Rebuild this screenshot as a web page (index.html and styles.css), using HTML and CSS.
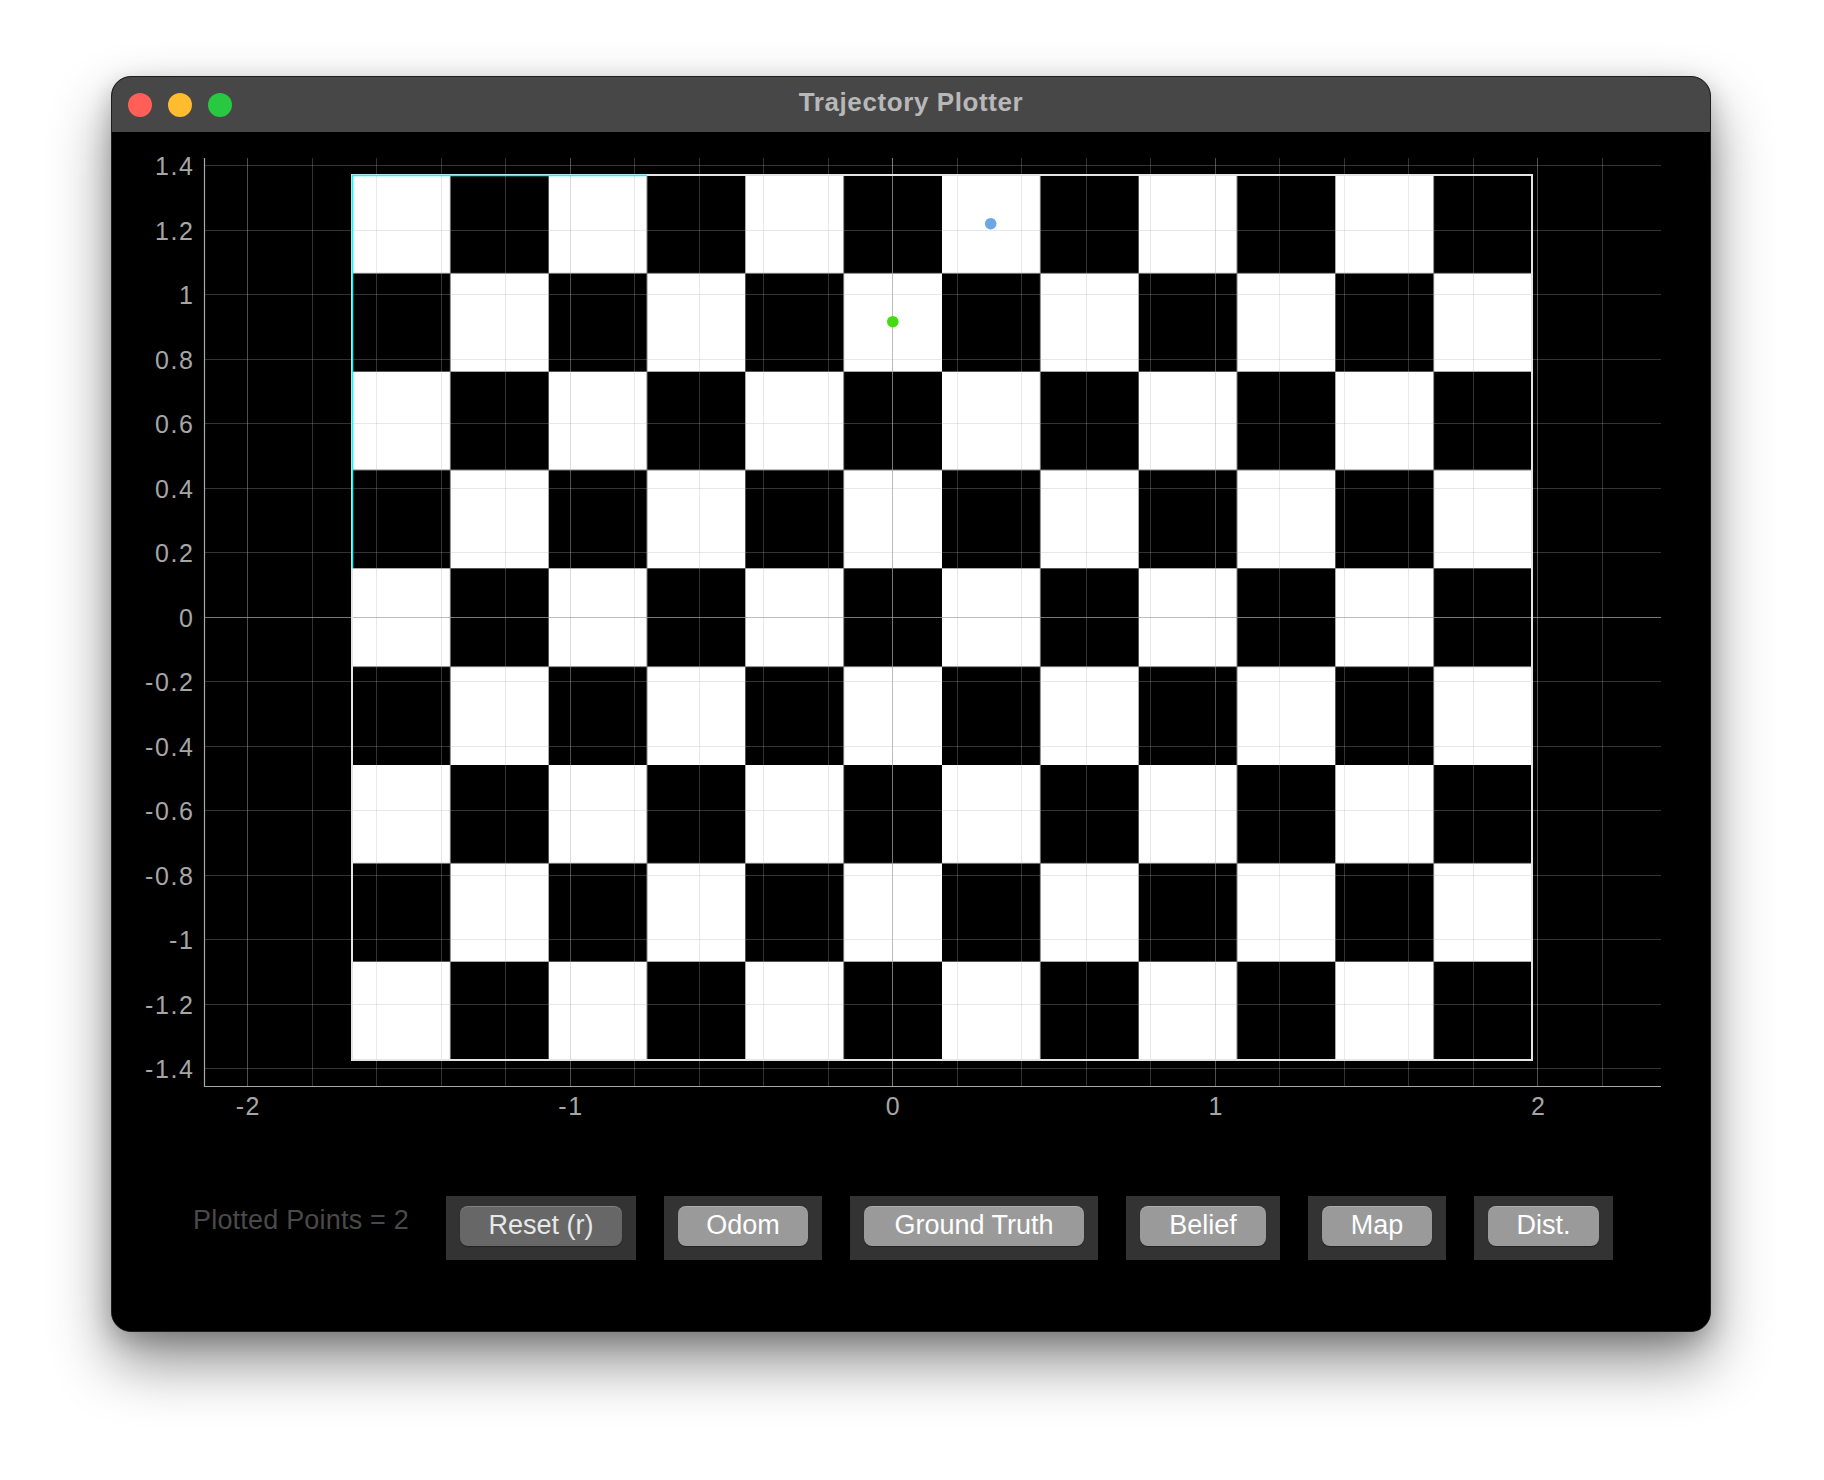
FILE: index.html
```html
<!DOCTYPE html>
<html lang="en">
<head>
<meta charset="utf-8">
<title>Trajectory Plotter</title>
<link rel="stylesheet" href="styles.css">
</head>
<body>
<div class="window">
  <div class="titlebar">
    <div class="lights">
      <span class="light light-red"></span>
      <span class="light light-yellow"></span>
      <span class="light light-green"></span>
    </div>
    <div class="title">Trajectory Plotter</div>
    <div></div>
  </div>
  <div class="content">
    <svg class="plot" viewBox="112 132 1598 1000" width="1598" height="1000" xmlns="http://www.w3.org/2000/svg">
      <defs>
        <pattern id="checker" patternUnits="userSpaceOnUse" x="352" y="175" width="196.667" height="196.667">
          <rect class="cell-white" x="0" y="0" width="98.333" height="98.333"/>
          <rect class="cell-white" x="98.333" y="98.333" width="98.333" height="98.333"/>
        </pattern>
      </defs>

      <rect class="board" x="352" y="175" width="1180" height="885" fill="url(#checker)"/>

      <path class="grid-minor" d="M312.5 158V1086 M376.5 158V1086 M441.5 158V1086 M505.5 158V1086 M634.5 158V1086 M699.5 158V1086 M763.5 158V1086 M828.5 158V1086 M957.5 158V1086 M1021.5 158V1086 M1086.5 158V1086 M1150.5 158V1086 M1279.5 158V1086 M1344.5 158V1086 M1408.5 158V1086 M1473.5 158V1086 M1602.5 158V1086
        M204 165.5H1661 M204 230.5H1661 M204 294.5H1661 M204 359.5H1661 M204 423.5H1661 M204 488.5H1661 M204 552.5H1661 M204 681.5H1661 M204 746.5H1661 M204 810.5H1661 M204 875.5H1661 M204 939.5H1661 M204 1004.5H1661 M204 1068.5H1661"/>
      <path class="grid-major" d="M247.5 158V1086 M570.5 158V1086 M1215.5 158V1086 M1537.5 158V1086"/>
      <path class="grid-zero" d="M892.5 158V1086 M204 617.5H1661"/>

      <rect class="board-edge" x="352" y="175" width="1180" height="885"/>
      <path class="trail" d="M352.5 568.3V175.5H647"/>

      <path class="axis" d="M204.5 158V1086.5H1661"/>

      <circle class="dot-belief" cx="990.7" cy="223.7" r="5.8"/>
      <circle class="dot-odom" cx="892.8" cy="321.7" r="5.8"/>

      <g class="tick tick-y">
        <text x="194.5" y="175">1.4</text>
        <text x="194.5" y="239.5">1.2</text>
        <text x="194.5" y="304">1</text>
        <text x="194.5" y="368.5">0.8</text>
        <text x="194.5" y="433">0.6</text>
        <text x="194.5" y="497.6">0.4</text>
        <text x="194.5" y="562.1">0.2</text>
        <text x="194.5" y="626.6">0</text>
        <text x="194.5" y="691.1">-0.2</text>
        <text x="194.5" y="755.6">-0.4</text>
        <text x="194.5" y="820.2">-0.6</text>
        <text x="194.5" y="884.7">-0.8</text>
        <text x="194.5" y="949.2">-1</text>
        <text x="194.5" y="1013.7">-1.2</text>
        <text x="194.5" y="1078.2">-1.4</text>
      </g>
      <g class="tick tick-x">
        <text x="248.4" y="1114.5">-2</text>
        <text x="571" y="1114.5">-1</text>
        <text x="893.6" y="1114.5">0</text>
        <text x="1216.2" y="1114.5">1</text>
        <text x="1538.8" y="1114.5">2</text>
      </g>
    </svg>

    <div class="controls">
      <div class="count">Plotted Points = 2</div>
      <div class="btn-box"><button class="btn btn-dark btn-reset">Reset (r)</button></div>
      <div class="btn-box"><button class="btn btn-odom">Odom</button></div>
      <div class="btn-box"><button class="btn btn-gt">Ground Truth</button></div>
      <div class="btn-box"><button class="btn btn-belief">Belief</button></div>
      <div class="btn-box"><button class="btn btn-map">Map</button></div>
      <div class="btn-box"><button class="btn btn-dist">Dist.</button></div>
    </div>
  </div>
</div>
</body>
</html>
```

FILE: styles.css
```css
html, body {
  margin: 0;
  padding: 0;
}

body {
  width: 1824px;
  height: 1480px;
  overflow: hidden;
  background: #ffffff;
  font-family: "Liberation Sans", Arial, sans-serif;
  padding-top: 76px;
  box-sizing: border-box;
}

.window {
  margin-left: 111px;
  width: 1600px;
  height: 1256px;
  box-sizing: border-box;
  border: 1px solid #1e1e1e;
  border-radius: 20px;
  overflow: hidden;
  background: #000;
  box-shadow: 0 30px 60px rgba(0, 0, 0, 0.45), 0 8px 24px rgba(0, 0, 0, 0.2);
}

.titlebar {
  height: 55px;
  background: #474747;
  display: grid;
  grid-template-columns: 1fr auto 1fr;
  align-items: center;
}

.lights {
  display: flex;
  gap: 16px;
  padding-left: 16px;
}

.light {
  width: 24px;
  height: 24px;
  border-radius: 50%;
}

.light-red { background: #ff5f57; }
.light-yellow { background: #febc2e; }
.light-green { background: #28c840; }

.title {
  font-weight: bold;
  font-size: 26px;
  line-height: 51px;
  height: 55px;
  color: #b8b8b8;
  letter-spacing: 0.6px;
}

.content {
  height: 1199px;
  background: #000;
}

.plot {
  display: block;
}

.cell-white { fill: #ffffff; }

.board {
  shape-rendering: crispEdges;
}

.grid-minor {
  fill: none;
  stroke: rgba(176, 176, 176, 0.29);
  stroke-width: 1;
}

.grid-major {
  fill: none;
  stroke: rgba(176, 176, 176, 0.45);
  stroke-width: 1;
}

.grid-zero {
  fill: none;
  stroke: rgba(163, 163, 163, 0.73);
  stroke-width: 1;
}

.board-edge {
  fill: none;
  stroke: #e4e4e4;
  stroke-width: 2;
}

.trail {
  fill: none;
  stroke: #00ffff;
  stroke-width: 1.5;
}

.axis {
  fill: none;
  stroke: #a8a8a8;
  stroke-width: 1.2;
}

.dot-belief { fill: #6ba7e3; }
.dot-odom { fill: #43dc0f; }

.tick {
  font-family: "Liberation Sans", Arial, sans-serif;
  font-size: 25px;
  fill: #a6a6a6;
  letter-spacing: 1.6px;
}

.tick-y { text-anchor: end; }
.tick-x { text-anchor: middle; }

.controls {
  display: flex;
  align-items: flex-start;
  gap: 28px;
  padding: 64px 0 0 81px;
}

.count {
  width: 225px;
  margin-top: 9px;
  font-size: 27px;
  line-height: 31px;
  color: #4a4a4a;
  letter-spacing: 0.2px;
  white-space: nowrap;
}

.btn-box {
  background: #333333;
  padding: 10px 14px 14px;
}

.btn {
  display: block;
  height: 40px;
  box-sizing: border-box;
  border: 0;
  border-radius: 8px;
  padding: 0 0 2px;
  background: #9a9a9a;
  color: #ffffff;
  font-family: "Liberation Sans", Arial, sans-serif;
  font-size: 27px;
  line-height: 38px;
  text-align: center;
  white-space: nowrap;
  box-shadow: inset 0 1px 0 rgba(255, 255, 255, 0.18), 0 1px 1px rgba(0, 0, 0, 0.35);
}

.btn-dark {
  background: #676767;
  color: #e8e8e8;
}

.btn-reset { width: 162px; }
.btn-odom { width: 130px; }
.btn-gt { width: 220px; }
.btn-belief { width: 126px; }
.btn-map { width: 110px; }
.btn-dist { width: 111px; }
```
